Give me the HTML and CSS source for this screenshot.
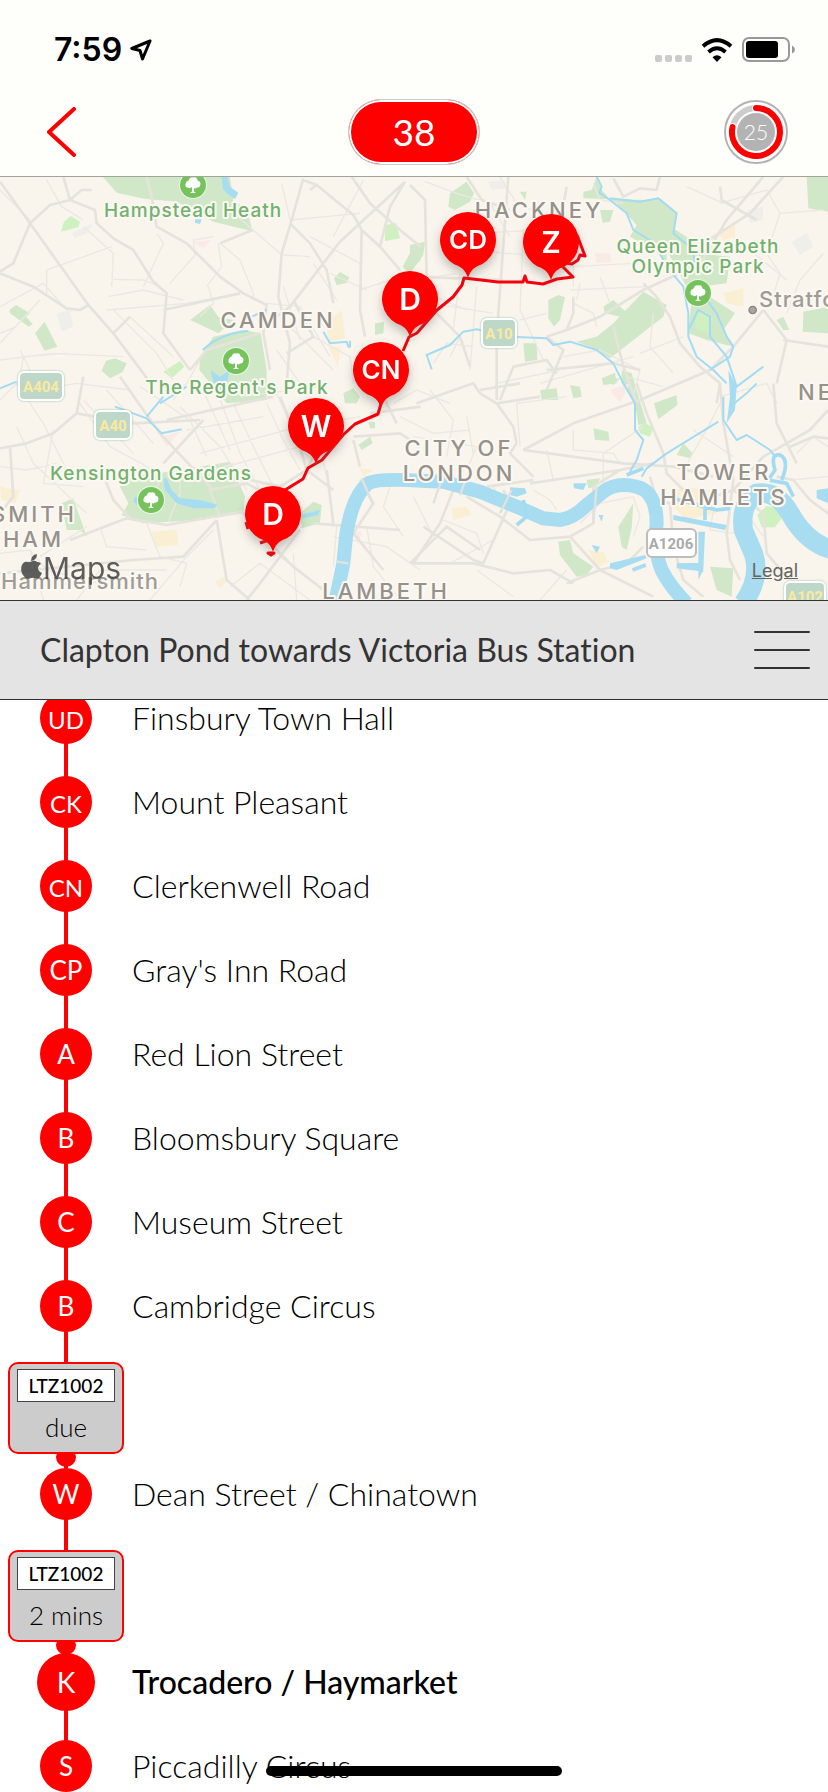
FILE: index.html
```html
<!DOCTYPE html>
<html lang="en">
<head>
<meta charset="utf-8">
<meta name="viewport" content="width=device-width, initial-scale=1">
<title>Route 38</title>
<link rel="stylesheet" href="styles.css">
</head>
<body>
<div class="app">
  <header class="top">
    <div class="status">
      <div class="status-left">
        <span class="time">7:59</span>
        <svg class="locate" viewBox="0 0 22 22" width="22" height="22" aria-hidden="true"><path d="M20 2 1.800 9.500 10 11.500 12.500 20Z"/></svg>
      </div>
      <div class="status-right">
        <svg class="signal" viewBox="0 0 37 7" width="37" height="7" aria-hidden="true"><rect width="7" height="7" rx="2"/><rect x="10" width="7" height="7" rx="2"/><rect x="20" width="7" height="7" rx="2"/><rect x="30" width="7" height="7" rx="2"/></svg>
        <svg class="wifi" viewBox="0 0 32 24" width="32" height="24" aria-hidden="true"><path d="M2 8.200Q16-4 30 8.200M7.500 14Q16 6.500 24.500 14"/><path class="wifi-dot" d="M16 24 11.500 19.200Q16 15.500 20.500 19.200Z"/></svg>
        <svg class="battery" viewBox="0 0 54 26" width="54" height="26" aria-hidden="true"><rect class="battery-case" x="1" y="1" width="46" height="23" rx="6"/><rect x="4" y="4" width="32" height="17" rx="3"/><path class="battery-tip" d="M50 8.500Q53 10 53 12.500T50 16.500Z"/></svg>
      </div>
    </div>
    <nav class="nav">
      <button class="back" aria-label="Back"><svg viewBox="0 0 30 50" width="30" height="50"><path d="M27 2 2 25 27 48"/></svg></button>
      <h1 class="route">38</h1>
      <button class="refresh" aria-label="Refresh in 25 seconds">
        <svg viewBox="0 0 64 64" width="64" height="64">
          <circle class="ring-edge" cx="32" cy="32" r="31"/>
          <circle class="ring-track" cx="32" cy="32" r="24"/>
          <path class="ring-gap" d="M32 8A24 24 0 1 1 8.500 27"/>
          <path class="ring-arc" d="M32 8A24 24 0 1 1 8.500 27"/>
          <circle class="ring-core" cx="32" cy="32" r="19"/>
          <text class="ring-text" x="32" y="40">25</text>
        </svg>
      </button>
    </nav>
  </header>

  <section class="map" aria-label="Route map">
    <svg class="map-art" viewBox="0 177 828 423" preserveAspectRatio="xMidYMid slice">
      <defs>
        <g id="tree"><circle r="14" fill="#fff" opacity=".6"/><circle r="13" fill="#76c35e"/><path fill="#fff" d="M-1 2Q-3 4-5 2.500-8 2.500-7.500-1-7-4-4.500-4.500-3-8.500 0-7.500 4-8.500 4.500-4.500 7.500-4 7.500-1 7 3 4 2.500 2.500 4 1 3L1 6.500 3 8H-3L-1 6.500Z"/></g>
        <path id="pin" d="M0 38C-3 29-7 27-14 24.200A28 28 0 1 1 14 24.200C7 27 3 29 0 38Z"/>
        <filter id="shade" x="-40%" y="-30%" width="180%" height="180%"><feDropShadow dx="0" dy="5" stdDeviation="5" flood-color="#555" flood-opacity=".35"/></filter>
      </defs>
      <g transform="translate(0 170) scale(.333333)">
        <g class="park">
          <path d="M308 20 350 68 432 86 530 95 640 155 758 184 740 118 700 92 690 20ZM28 420 48 405 90 430 78 440 98 462 86 470 30 430ZM105 490 134 455 172 530 134 542ZM305 602 318 572 345 565 380 580 368 606 330 625ZM570 450 630 405 655 440 700 450 655 490ZM600 560 640 500 730 480 782 490 800 600 800 690 680 700 598 600ZM1002 325 1020 306 1048 322 1040 338 1010 346ZM1125 460 1152 456 1150 490 1125 495ZM1245 220 1262 225 1262 270 1225 306 1208 290Z"/>
          <path d="M1350 70 1400 35 1422 70 1410 95 1365 120 1345 110ZM1750 65 1775 60 1790 20 1805 60 1830 88 1750 85ZM1830 88 1960 90 1975 82 2030 130 2020 175 2105 230 2060 250 2000 240 2000 290 1975 250 1890 200 1910 165 1850 100ZM1800 120 1840 120 1830 155 1808 158ZM2000 240 2190 260 2180 340 2100 350 2060 350ZM1560 65 1580 65 1575 90ZM1230 225 1275 215 1270 255 1230 310ZM1645 390 1675 375 1695 382 1680 450 1662 470 1645 445ZM1730 515 1790 500 1840 460 1930 365 2000 405 1990 440 1830 565 1770 530ZM1810 410 1840 390 1882 430 1860 440 1815 430ZM1570 520 1610 520 1612 570 1575 575ZM2075 385 2130 380 2205 430 2170 480 2200 530 2120 510 2065 490ZM2420 20H2484V125L2425 115ZM2410 425 2484 410V490L2408 485ZM2330 450 2350 440 2368 480 2350 480ZM1805 625 1845 608 1850 640 1810 645Z"/>
          <path d="M375 935 400 920 540 900 690 875 735 980 730 1030 600 1050 430 1060 365 1035 385 1000 360 950ZM185 1000 220 985 260 1100 240 1080 200 1080ZM900 1030 940 995 965 1005 960 1060 905 1075ZM1030 670 1060 655 1080 680 1070 700 1035 700ZM1075 825 1110 800 1118 820 1085 840ZM1105 755 1125 755 1125 775 1110 775Z"/>
          <path d="M1620 660 1670 655 1675 690 1625 690ZM1710 645 1740 650 1745 680 1720 685ZM1805 630 1860 625 1840 645ZM1865 600 1895 610 1940 760 1915 765 1905 700 1865 640ZM1962 700 2030 675 2032 705 1975 748ZM1780 775 1825 785 1828 812 1785 810ZM2030 855 2050 820 2078 850 2070 865ZM1675 1115 1710 1110 1720 1150 1780 1190 1760 1215 1730 1220 1680 1155ZM1855 1070 1900 1000 1895 1075 1880 1140 1865 1130ZM2130 1190 2200 1195 2195 1280 2150 1260ZM1760 930 1800 925 1790 950 1765 955Z"/>
        </g>
        <path class="grass" d="M183 185 192 155 212 138 240 155 235 172ZM1155 165 1188 160 1200 205 1155 213ZM490 605 540 573 553 590 515 625ZM2090 430 2120 425 2140 450 2125 485 2095 480 2085 460ZM1915 770 1935 758 1960 775 1950 800 1920 790ZM2272 1035 2300 1008 2335 1015 2345 1045 2325 1072 2285 1072Z"/>
        <path class="sand" d="M975 460 1025 420 1035 505 990 515ZM985 530 1020 530 1015 590ZM455 1085 530 1080 535 1125 465 1130ZM0 950 60 960 45 1000 5 990ZM2155 190 2205 155 2205 200 2170 210ZM2170 370 2230 355 2230 410 2180 400ZM2040 950 2130 960 2150 1030 2060 1050 2010 1000ZM1765 1140 1810 1145 1825 1175 1790 1195ZM1355 1015 1400 1010 1415 1035 1360 1050ZM1080 895 1120 900 1090 920ZM645 1235 670 1220 680 1235 660 1255Z"/>
        <path class="rose" d="M580 215 635 210 610 235ZM480 800 540 785 500 830ZM1785 250 1830 250 1835 275 1790 280ZM1830 660 1890 640 1860 700ZM1060 1085 1085 1085 1075 1125Z"/>
        <path class="slate" d="M215 190 280 160 260 190 225 205ZM170 430 210 420 220 470 185 485ZM1465 35 1510 30 1520 55 1475 60ZM2240 120 2290 110 2290 150 2250 160ZM2375 215 2420 190 2440 230 2400 255Z"/>

        <g class="lane">
          <path d="M0 60 90 150M140 30 185 110 250 150M250 170 340 250 335 350M140 370V300L335 230M0 410 130 340 200 420M0 520 120 390M0 570 160 550 370 560M60 540 100 620 90 630M340 328 430 330 470 345M325 380 430 360 550 390M320 420 560 400 720 370M430 350 490 220 470 190M340 420 470 550 520 630M390 440 520 560M510 340 585 255 580 210 640 200M660 220 720 270 760 370 760 390M620 350 665 290 655 220M625 350 640 400 600 440M690 120 840 250M845 40 870 150 1080 130M850 255 930 260M930 200 1080 280M1000 200 1090 30M940 280 1010 390M990 310 1100 360M1080 360 1200 320M800 400 900 410 990 560M850 350 900 510M870 470 1000 600M1090 520 1060 620M0 490 50 470M60 620 70 560 200 550M600 570 560 640 520 690M830 540 900 640M940 500 1050 560 1060 640"/>
          <path d="M1250 330 1370 310M1275 35 1370 70 1470 100 1530 200M1500 20 1550 100 1620 130M1400 190 1640 180M1400 240 1640 260M1430 350 1410 600M1380 310 1360 480M1280 370 1400 420M1300 400 1480 430M1570 180 1560 420 1630 570M1720 350V290L1900 280M1710 360 1940 350M1740 340 1730 390M1800 320 1830 400M1720 400 1780 430 1790 470M1640 430 1560 450M1350 560 1380 500M1300 580 1340 520 1420 530M1620 640 1900 560M1690 560 1800 540 1920 600 1900 680M1960 430 1950 530 2020 610M1920 550 2050 500M1880 620 1990 650M2160 680 2300 640 2330 700M2160 100 2300 60 2340 130 2470 120M2340 130 2300 250 2340 310 2310 410M2200 200 2360 330M2060 50 2170 100M2470 250 2400 330 2360 430M1780 40 1800 90 1870 100"/>
          <path d="M0 690 50 640 130 760 200 900M50 770 100 880 260 1030M0 890 80 900 170 880M160 780 130 940 250 950M240 700 330 830 480 910M250 690 400 850M320 660 460 820M170 650 230 640 390 660M420 650 570 750 620 860M540 710 660 830 740 960M600 640 690 840M650 660 720 850 780 960M700 700 760 830 820 950M800 700 850 810 900 900M820 650 880 780 950 870M900 700 960 830 980 920M560 780 790 740M600 850 860 780 1080 740M640 900 900 830M720 680 960 650M480 930 440 1020M540 910V970L505 1055M560 930 700 880M440 1060 480 1160 560 1180 540 1250M120 1160 260 1070M90 1140 140 1200 300 1240M0 1150 90 1140 130 1290M300 1070 320 1130 440 1140M230 1290 300 1200 500 1200M450 1290 560 1160 640 1080M690 1250 780 1180 930 1290M880 1150 890 1290M840 1160 960 1250M1000 1100 1160 1130 1260 1200M1100 1070 1120 1190 1200 1290M1180 920 1150 1010 1210 1100M1010 1070 1000 1190"/>
          <path d="M1180 700 1250 660 1350 700M1200 740 1300 790 1410 780M1240 800 1430 830 1400 900M1290 660 1360 750 1340 860M1400 740 1420 850M1490 640 1680 600M1560 830 1550 700 1700 680M1660 930 1640 840M1720 780V840L1840 850 1860 880M1810 940V850L1930 770M1600 960 1650 990 1670 1020M1740 1060 1800 1000 1900 980 1920 1040 1900 1100M1480 950 1510 1010M1330 1050 1430 1090 1450 1150M1350 1180 1480 1110M1240 980 1300 1100M1430 1200 1540 1280M1620 1290 1700 1200M2050 900 2130 760 2160 700M2080 780 2170 840 2200 860M2150 970 2130 1080 2200 1090M2250 950 2240 1030 2290 1100M2370 930 2484 920M2390 850 2440 800 2484 830M1960 1130 1980 1200 2050 1260"/>
        </g>
        <g class="road">
          <path d="M0 35 90 160 265 405 340 490 460 650M90 160 40 280 0 305M90 160 150 105 210 90 245 60 275 60M190 20 210 90 285 120 290 160 340 205 400 240 460 335 500 370 490 490 570 600M440 20 455 80 470 170 560 220 660 320 730 370 800 405M0 310 100 350 200 415 240 420 265 405M910 25 875 150 845 250 835 380 870 520 860 640M910 30 950 45 1060 135 1085 180 1140 230 1200 300M950 45 930 60M1055 20 1110 100 1200 180 1262 230M1215 35 1020 215 870 410 830 440M1085 180 1080 420 1095 500M1215 35 1170 110 1140 230M870 160 930 220 980 300 1000 400M800 400 790 490 810 600M340 490 390 440M860 550 940 500 880 390M490 420 720 370M570 600 620 540 780 490M660 220 758 180"/>
          <path d="M1230 45 1275 90 1280 320M1400 20 1445 90 1530 120M1525 20 1490 500 1490 690M1230 320 1510 330M1700 50 1680 160M1840 25 1870 80 1920 55 1970 60 1980 20M2160 50 2165 90 2270 150M2290 20 2180 150 2090 300M2350 20 2250 130 2110 220 2060 300 1930 360 1800 440 1700 480 1640 500M1640 500 1690 540 1640 660M1720 380V430L1700 480M1930 340 1970 380 2010 440 2040 520 2100 590 2160 640 2150 700M1920 600 1840 580 1640 600M1310 430 1380 500 1410 590M1500 690 1540 590 1640 570 1670 610M2290 420 2200 530 2130 600 1920 690 1720 760 1570 840M2290 420 2360 510 2330 640M2350 510 2484 530M1840 470 1870 590 1910 700"/>
          <path d="M0 835 80 820 160 790 230 730 400 760 600 750M30 830 40 980 0 1030M230 730 250 620M640 960 480 790 430 720 360 620M210 1110 380 1045 500 1065 730 1025M390 1045 340 990 300 890M650 1050 680 1230 750 1290M650 1050 550 1160 400 1170 0 1210M730 1030 800 1110 880 1190 970 1260M900 1080 780 1240 740 1290M940 1060 1200 1080M1080 930 1120 1000 1060 1090 1150 1200M980 900 1000 1060M750 930 840 950 920 900 960 820M840 680 890 800 920 900 1000 960M500 750 820 680M1060 800 1200 790 1262 830M1060 810 1080 890M1130 640 1190 760M1110 730 1262 710M660 1040 630 960 740 940 850 1000M610 750 490 880"/>
          <path d="M1250 700 1420 640 1440 670 1490 700 1540 770 1550 820M1490 700 1620 680M1440 660 1560 640M1550 820 1530 850 1600 920M1570 840 1870 880 2020 890 2140 920M1590 940 1860 900 1960 880M1600 930 1460 950M1510 960 1530 1000 1450 1180 1420 1170 1270 1070M1360 960 1320 1060 1240 1180 1330 1180 1420 1180 1540 1210 1650 1200 1720 1240M1400 980 1500 1040 1590 1110 1710 1100 1780 1060 1780 950 1860 900M1230 1180 1340 1070 1440 1140M1710 1100 1800 1200 1960 1280M1700 1240 1800 1200 1880 1180 1930 1130M1910 640 1940 730 1990 850 2000 910 2050 960M2160 640 2170 760 2200 930 2180 1090 2190 1170 2220 1230M2320 640 2330 760 2360 820 2430 780 2484 720M2360 820 2290 860 2200 960 2140 980M2200 960 2290 1030 2300 1150 2360 1220M2370 830 2440 800 2484 805M2360 820 2390 880M1950 920 1970 990 2010 1000 2020 1130 2050 1230 2110 1280M2330 920 2380 930 2430 990 2484 1030"/>
        </g>

        <g class="river">
          <path class="thames" d="M1005 1300 1030 1180 1038 1100Q1055 980 1105 940 1130 925 1262 932L1330 935 1440 965 1550 1010 1630 1045 1680 1050Q1720 1045 1760 1005L1810 965Q1850 935 1910 950 1970 965 1970 1060 1960 1140 1985 1200 2010 1250 2060 1300"/>
          <path class="thames" d="M2230 1300Q2285 1220 2260 1150L2230 1080Q2220 1000 2270 970 2330 960 2370 1030 2420 1120 2500 1140"/>
        </g>
        <path class="lake" d="M665 20 682 20 690 50 715 68 705 88 680 70 668 55ZM585 148 605 148 600 162 585 158ZM632 600 660 620 690 600 680 640 660 665 640 640ZM490 925 500 925 515 960 540 985 600 990 655 1005 640 1015 580 1015 530 1000 495 960ZM405 980 415 985 410 1005 400 995ZM1530 952 1575 955 1580 970 1550 980 1530 975ZM1720 940 1760 940 1750 960 1722 955ZM1775 1125 1800 1130 1790 1150ZM1795 1035 1810 1035 1805 1055ZM2020 1035 2180 1065 2175 1080 2020 1050ZM2095 1085 2115 1085 2110 1200 2095 1230ZM2030 1180 2110 1178 2110 1205 2030 1195ZM1830 1180 1935 1155 1940 1165 1850 1200 1830 1195ZM1895 1195 1935 1180 1940 1190 1900 1205ZM2450 960 2484 955V1000L2450 985ZM2185 600 2210 650 2205 720 2180 760 2190 680ZM900 1035 960 1020 955 1035 910 1045Z"/>
        <g class="stream">
          <path d="M608 540Q660 490 745 483M755 440 800 420M970 485 990 520 1040 515 1045 530H1050V512M0 655 50 635M480 700 560 650M345 710 440 745 485 790 545 778M440 740 490 680M1295 598 1280 555 1350 525 1390 485 1430 478 1530 500 1640 505 1660 525 1710 515 1790 540 1840 580 1870 640 1905 700V780L1930 810 1910 870 1890 905M2155 755 2000 850 1940 895 1925 920"/>
          <path d="M1790 20 1805 50 1798 68 1830 90 1880 130 1900 180 1965 220 2000 290 2050 350 2065 430V500L2090 560 2140 600 2180 640M1830 85 1920 95 1975 85 2030 130 2020 190 2080 240 2085 300M2085 340 2150 430 2180 500 2200 530 2190 560 2130 600M2065 480 2095 420 2130 440 2130 500 2180 560 2210 650 2290 590M2170 680V750L2210 810 2240 795 2310 840 2325 860M2200 650 2190 710 2240 670 2270 640"/>
          <path class="creek" d="M2345 930Q2370 870 2340 855 2310 850 2325 900L2305 930 2360 940 2380 980M1550 1065 1580 1040 1570 990M2000 980 2150 1020 2190 1015M2115 1010V1050M1880 915 1930 895"/>
        </g>
        <g class="bridge"><path d="M1085 925 1120 1005M1010 1175 1045 1180M1325 930 1300 1000M1395 935 1380 975M1535 960 1500 1030M1790 950 1780 1060"/></g>
        <circle class="town" cx="2258" cy="420" r="11"/>
      </g>

      <g class="labels">
        <g class="leisure">
          <text x="193" y="217">Hampstead Heath</text><text x="237" y="394">The Regent's Park</text><text x="151" y="480">Kensington Gardens</text>
          <text x="698" y="253">Queen Elizabeth</text><text x="698" y="273">Olympic Park</text>
        </g>
        <g class="district">
          <text x="278" y="328">CAMDEN</text><text x="539" y="218">HACKNEY</text><text x="459" y="456">CITY OF</text><text x="459" y="481">LONDON</text><text x="724" y="480">TOWER</text><text x="724" y="505">HAMLETS</text><text x="386" y="599">LAMBETH</text>
          <text class="from-left" x="798" y="400">NEWHAM</text><text class="from-right" x="77" y="522">HAMMERSMITH</text><text class="from-right" x="64" y="547">&amp; FULHAM</text>
        </g>
        <g class="place"><text x="759" y="307">Stratford</text><text x="1" y="589">Hammersmith</text></g>
      </g>
      <use href="#tree" x="193" y="185"/><use href="#tree" x="236" y="361"/><use href="#tree" x="151" y="500"/><use href="#tree" x="698" y="293"/>
      <g class="shield">
        <rect x="19" y="372" width="44" height="28" rx="5"/><rect x="95" y="411" width="36" height="28" rx="5"/><rect x="482" y="319" width="34" height="28" rx="5"/><rect x="785" y="582" width="40" height="28" rx="5"/>
        <text x="41" y="392">A404</text><text x="113" y="431">A40</text><text x="499" y="339">A10</text><text x="805" y="602">A102</text>
      </g>
      <g class="shield-minor"><rect x="647" y="529" width="49" height="28" rx="5"/><text x="671" y="549">A1206</text></g>

      <path class="line" d="M577 235 585 256 580 255 578 260 572 264 558 262 573 277 557 279 543 284 527 282 525 276 523 282 498 282 464 278 462 285 453 297 437 310 417 333 409 337 403 351M383 396 380 407 378 414 355 424 343 435 322 460 308 468 303 479 285 490M246 522 248 529M260 543 269 540M268 553 274 553 271 555Z"/>
      <g filter="url(#shade)" class="pins"><use href="#pin" x="468" y="240"/><use href="#pin" x="551" y="242"/><use href="#pin" x="410" y="299"/><use href="#pin" x="381" y="370"/><use href="#pin" x="316" y="426"/><use href="#pin" x="273" y="514"/></g>
      <g class="pin-text">
        <text x="551" y="253">Z</text><text x="410" y="310">D</text><text x="316" y="437">W</text><text x="273" y="525">D</text>
        <text class="pair" x="468" y="249">CD</text><text class="pair" x="381" y="379">CN</text>
      </g>
      <g class="brand"><path d="M37 562C33 559 31 563 28 562 22 560 19 569 23 575 27 581 29 578 32 578 36 577 38 582 42 573 37 571 37 566 41 564 40 562 38 562 37 562ZM31 561Q31 555 37 554 37 560 31 561Z"/><text x="43" y="579">Maps</text></g>
    </svg>
    <a class="legal" href="#legal">Legal</a>
  </section>

  <section class="direction">
    <h2>Clapton Pond towards Victoria Bus Station</h2>
    <button class="menu" aria-label="Menu"><svg viewBox="0 0 56 40" width="56" height="40"><path d="M1 2H55M1 20H55M1 38H55"/></svg></button>
  </section>

  <main class="scroller">
    <ol class="stops">
      <li class="stop"><span class="dot two">UD</span><span class="name">Finsbury Town Hall</span></li>
      <li class="stop"><span class="dot two">CK</span><span class="name">Mount Pleasant</span></li>
      <li class="stop"><span class="dot two">CN</span><span class="name">Clerkenwell Road</span></li>
      <li class="stop"><span class="dot">CP</span><span class="name">Gray's Inn Road</span></li>
      <li class="stop"><span class="dot">A</span><span class="name">Red Lion Street</span></li>
      <li class="stop"><span class="dot">B</span><span class="name">Bloomsbury Square</span></li>
      <li class="stop"><span class="dot">C</span><span class="name">Museum Street</span></li>
      <li class="stop"><span class="dot">B</span><span class="name">Cambridge Circus</span></li>
      <li class="bus"><div class="card"><span class="plate">LTZ1002</span><span class="eta">due</span></div></li>
      <li class="stop"><span class="dot">W</span><span class="name">Dean Street / Chinatown</span></li>
      <li class="bus"><div class="card"><span class="plate">LTZ1002</span><span class="eta">2 mins</span></div></li>
      <li class="stop current"><span class="dot">K</span><span class="name">Trocadero / Haymarket</span></li>
      <li class="stop"><span class="dot">S</span><span class="name">Piccadilly Circus</span></li>
    </ol>
  </main>
  <div class="home"></div>
</div>
</body>
</html>
```
FILE: styles.css
```css
* { box-sizing: border-box; }
body { margin: 0; background: #fff; color: #000; font-family: Lato, "Liberation Sans", sans-serif; font-variant-ligatures: none; }
button { padding: 0; border: 0; background: none; font: inherit; display: flex; }
h1, h2 { margin: 0; font-weight: 400; }
svg { display: block; }

.app { position: relative; height: 100vh; display: flex; flex-direction: column; overflow: hidden; }
.top { background: #fefefb; border-bottom: 1px solid #a3a39b; }
.status { height: 88px; padding: 12px 32px 0 54px; display: flex; align-items: center; justify-content: space-between; }
.status-left { display: flex; align-items: center; gap: 8px; }
.time { font: 600 32px/36px Inter, sans-serif; }
.locate { fill: none; stroke: #000; stroke-width: 3; stroke-linejoin: round; }
.status-right { display: flex; align-items: flex-end; gap: 9px; }
.signal { fill: #ccc; margin-bottom: 1px; }
.wifi { fill: none; stroke: #000; stroke-width: 4; margin-bottom: 1px; }
.wifi .wifi-dot { fill: #000; stroke: none; }
.battery-case { fill: none; stroke: #999; stroke-width: 2; }
.battery-tip { fill: #999; }

.nav { height: 88px; padding: 0 40px; display: grid; grid-template-columns: 1fr auto 1fr; align-items: center; }
.back { padding-left: 7px; }
.back svg { fill: none; stroke: #f00; stroke-width: 4; stroke-linecap: round; stroke-linejoin: round; }
.route { width: 132px; height: 66px; border: 1px solid #ccc; border-radius: 33px; padding: 2px; background: #f00; color: #fff; text-align: center; font-size: 37px; line-height: 60px; box-shadow: inset 0 0 0 2px #fff; }
.refresh { justify-self: end; }
.ring-edge { fill: #fff; stroke: #b3b3b3; stroke-width: 2; }
.ring-track { fill: none; stroke: #ccc; stroke-width: 6; }
.ring-gap { fill: none; stroke: #fff; stroke-width: 8; stroke-linecap: round; }
.ring-arc { fill: none; stroke: #f00; stroke-width: 6; stroke-linecap: round; }
.ring-core { fill: #b3b3b3; }
.ring-text { fill: #fff; font-size: 21px; font-weight: 300; text-anchor: middle; }

.map { position: relative; flex: none; aspect-ratio: 828 / 423; background: #f9f5ed; overflow: hidden; }
.map-art { width: 100%; height: 100%; font-family: Inter, sans-serif; }
.park { fill: #d0e8c7; }
.grass { fill: #cff0c0; }
.sand { fill: #faefd3; }
.rose { fill: #faeae6; }
.slate { fill: #f0eeea; }
.lane { fill: none; stroke: #ebe8e1; stroke-width: 4; }
.road { fill: none; stroke: #e6e3dc; stroke-width: 8; stroke-linejoin: round; }
.river { fill: none; stroke: #a8ddf1; }
.thames { stroke-width: 42; }
.thames + .thames { stroke-width: 58; }
.lake { fill: #a8ddf1; }
.stream { fill: none; stroke: #a3dbf2; stroke-width: 6; stroke-linejoin: round; }
.creek { stroke-width: 11; }
.bridge { fill: none; stroke: #e1e2dd; stroke-width: 7; }
.town { fill: #aaa59e; stroke: #88847e; stroke-width: 4; }
.labels { stroke: #fbf8f2; stroke-width: 4; stroke-linejoin: round; paint-order: stroke; text-anchor: middle; }
.leisure { fill: #72b16e; font-size: 19px; font-weight: 500; letter-spacing: 1px; }
.district { fill: #96918b; font-size: 22px; font-weight: 500; letter-spacing: 3px; }
.from-left { text-anchor: start; }
.from-right { text-anchor: end; }
.place { fill: #a19b95; font-size: 22px; font-weight: 500; letter-spacing: 1px; text-anchor: start; }
.shield { fill: #bdd8c8; stroke: #fff; stroke-width: 2; }
.shield rect { filter: drop-shadow(0 0 1px #8fbfa8); }
.shield text, .shield-minor text { font: 700 15px Roboto, sans-serif; text-anchor: middle; stroke: none; }
.shield text { fill: #fbe9a0; }
.shield-minor rect { fill: #fff; stroke: #bebcbc; stroke-width: 2; }
.shield-minor text { fill: #aaa; }
.pins { fill: #f00; }
.line { fill: none; stroke: #f5000c; stroke-width: 3; stroke-linejoin: round; }
.pin-text { fill: #fff; font-size: 30px; font-weight: 600; text-anchor: middle; }
.pin-text .pair { font-size: 26px; }
.brand { fill: #3c3c3c; opacity: .82; font-size: 30px; }
.legal { position: absolute; right: 30px; bottom: 18px; font: 400 18px/22px Inter, sans-serif; color: #66645f; }

.direction { flex: none; height: 100px; padding: 0 18px 0 40px; display: flex; align-items: center; justify-content: space-between; background: #e4e4e4; border: solid #333; border-width: 1px 0; color: #333; }
.direction h2 { font-size: 32px; line-height: 40px; }
.menu svg { fill: none; stroke: #333; stroke-width: 2; stroke-linecap: round; }

.scroller { flex: 1; min-height: 0; overflow: hidden; }
.stops { list-style: none; margin: -24px 0 0; padding: 0; }
.stop, .bus { position: relative; display: grid; grid-template-columns: 132px 1fr; align-items: center; }
.stop { height: 84px; }
.stop::before, .bus::before { content: ""; position: absolute; left: 64px; width: 4px; top: 0; bottom: 0; background: #f00; }
.stop:last-child::before { bottom: 50%; }
.dot { position: relative; justify-self: center; width: 52px; height: 52px; border-radius: 50%; background: #f00; color: #fff; text-align: center; font-size: 26px; line-height: 52px; }
.two { font-size: 24px; line-height: 56px; }
.name { font-size: 32px; font-weight: 300; line-height: 40px; }
.current .dot { width: 58px; height: 58px; font-size: 28px; line-height: 58px; }
.current .name { font-weight: 500; }
.bus { height: 104px; padding-top: 14px; }
.bus::after { content: ""; position: absolute; left: 56px; bottom: -15px; width: 20px; height: 20px; border-radius: 50%; background: #f00; }
.card { position: relative; z-index: 1; justify-self: center; width: 116px; height: 92px; padding: 5px 7px; border: 2px solid #f00; border-radius: 10px; background: #ccc; display: flex; flex-direction: column; text-align: center; }
.plate { height: 34px; border: 1px solid #444; background: #fff; font-size: 19px; line-height: 31px; font-weight: 500; }
.eta { font-size: 26px; line-height: 50px; font-weight: 300; }
.home { position: absolute; left: 50%; bottom: 16px; width: 296px; height: 10px; margin-left: -148px; border-radius: 5px; background: #000; }
```
